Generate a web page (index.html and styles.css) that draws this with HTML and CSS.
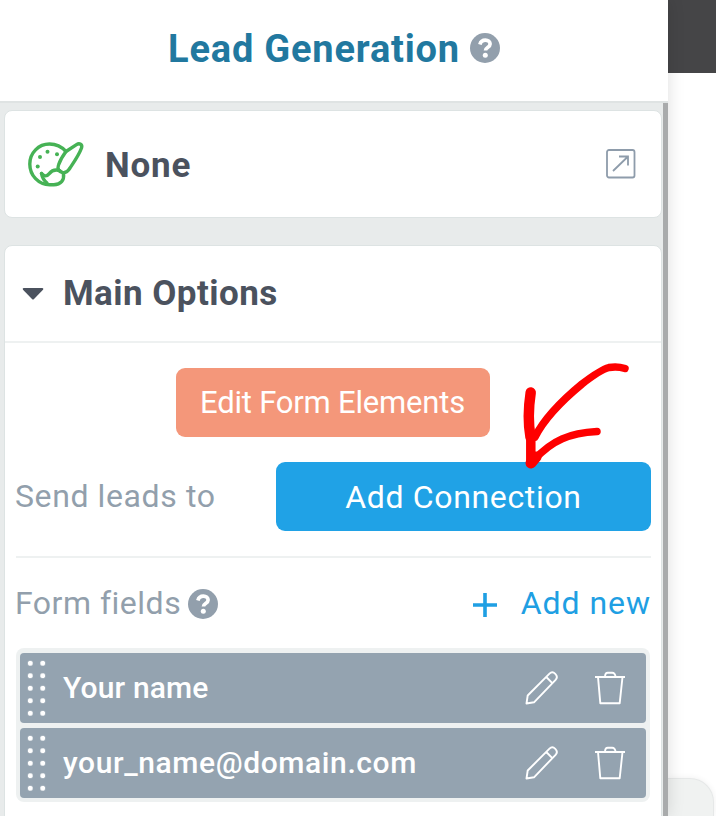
FILE: index.html
```
<!DOCTYPE html>
<html lang="en">
<head>
    <meta charset="UTF-8">
    <meta name="viewport" content="width=device-width, initial-scale=1.0">
    <title>Lead Generation</title>

    <link rel="stylesheet" href="styles.css">
</head>
<body>

    <svg class="sprite">
        <symbol id="help" viewBox="0 0 30 30">
            <circle cx="15" cy="15" r="15" fill="currentColor"/>
            <path d="M9.9 11.4C10.8 8.2 13 7.2 15.4 7.2c2.8 0 4.700 1.600 4.700 3.900 0 3.500-4.600 3.400-4.600 6.300" fill="none" stroke="#fff" stroke-width="3.700"/>
            <circle cx="15.300" cy="22.300" r="2.500" fill="#fff"/>
        </symbol>
        <symbol id="pencil" viewBox="0 0 34 34">
            <path d="M1.500 32.500l1.200-8L24.500 2.700c1.700-1.700 4-1.600 5.800.2s1.900 4.200.3 5.900L9 31.300zM21.300 6l6 6.200" fill="none" stroke="#fff" stroke-width="1.900" stroke-linejoin="round"/>
        </symbol>
        <symbol id="trash" viewBox="0 0 30 34">
            <path d="M0 6h30M3 6l2.300 26.200h19.400L27.500 6M10 6c0-3 1-4.200 2.800-4.200h4.400C19 1.800 20.500 3 20.500 6" fill="none" stroke="#fff" stroke-width="1.900" stroke-linejoin="round"/>
        </symbol>
    </svg>

    <div class="page">
        <div class="sidebar">
            <div class="header">
                <h1 class="title">Lead Generation</h1>
                <svg class="help"><use href="#help"/></svg>
            </div>
            <div class="panel">
                <div class="card template">
                    <svg class="palette" viewBox="0 0 58 48">
                        <g fill="none" stroke="#46b255" stroke-width="3.400" stroke-linejoin="round" stroke-linecap="round">
                            <path d="M39 11.500C34.500 6.500 29 4 22.500 4 11.500 4 2.800 13 2.800 24c0 11.500 8.700 20.700 20 20.700h4c7 0 10.700-4.500 9.700-11.200"/>
                            <path d="M39 11.500L49.500 4.600c3-2 6.200-.2 5 3.400-2.500 7-7.500 14-11.500 20-2.500 4-4.500 5.200-7.500 4.500-3.500-1-5.500-3.500-4-7.500 1.500-4.500 4.500-9.500 7.500-13.500z"/>
                            <path d="M14.500 33.500c3 3 5 3.300 7.500.3 2.800-3.400 6.500-4.800 11-3"/>
                            <path d="M14.500 33.500c.7 4 2.200 6.800 5.500 9.500"/>
                        </g>
                        <g fill="#46b255">
                            <circle cx="10.700" cy="26.500" r="2"/>
                            <circle cx="13" cy="17" r="2"/>
                            <circle cx="20.500" cy="11.800" r="2"/>
                            <circle cx="30" cy="14.300" r="2"/>
                        </g>
                    </svg>
                    <p class="template-name">None</p>
                    <svg class="open" viewBox="0 0 30 30" fill="none" stroke="#8e9cab" stroke-width="1.800">
                        <rect x="1" y="1" width="27.500" height="27.500" rx="2"/>
                        <path d="M7 22L22 7.500M13 7.500h9v9"/>
                    </svg>
                </div>

                <div class="card options">
                    <div class="options-head">
                        <svg class="caret" viewBox="0 0 22 12"><path d="M1.500 0h19q1.500.5.500 1.800L12 11q-1 1-2 0L1 1.800Q0 .5 1.500 0z" fill="#4b525e"/></svg>
                        <h2 class="options-title">Main Options</h2>
                    </div>
                    <div class="options-body">
                        <button class="btn btn-edit"><span>Edit Form Elements</span></button>
                        <div class="row">
                            <p class="label label-send">Send leads to</p>
                            <button class="btn btn-add"><span>Add Connection</span></button>
                        </div>
                        <div class="row fields-head">
                            <p class="label label-fields">Form fields</p>
                            <svg class="help"><use href="#help"/></svg>
                            <a class="add-new">
                                <svg class="plus" viewBox="0 0 24 24"><path d="M0 12h24M12 0v24" stroke="#1f9fe3" stroke-width="3.600"/></svg>
                                <span>Add new</span>
                            </a>
                        </div>
                        <div class="fields">
                            <div class="field">
                                <span class="grip"></span>
                                <p class="field-name">Your name</p>
                                <svg class="pencil"><use href="#pencil"/></svg>
                                <svg class="trash"><use href="#trash"/></svg>
                            </div>
                            <div class="field">
                                <span class="grip"></span>
                                <p class="field-name field-email">your_name@domain.com</p>
                                <svg class="pencil"><use href="#pencil"/></svg>
                                <svg class="trash"><use href="#trash"/></svg>
                            </div>
                        </div>
                    </div>
                </div>
                <div class="scrollbar"></div>
            </div>
        </div>
        <div class="preview">
            <div class="preview-bar"></div>
            <div class="preview-box"></div>
        </div>
    </div>

    <svg class="arrow" viewBox="0 0 112 112">
        <g fill="none" stroke="#fe0000" stroke-linecap="round" stroke-linejoin="round">
            <path d="M105 9.500C99 7.500 94 7.500 89 8.500 80 11 71 18 62 25 45 39 25 58 15 78" stroke-width="7.500"/>
            <path d="M10.700 33.500C8.500 48 8 64 10.500 78" stroke-width="10.500"/>
            <path d="M10.800 76v28" stroke-width="9.500"/>
            <path d="M77 72.500C50 74 32 81 14 101" stroke-width="7.500"/>
            <path d="M11 104l5-6" stroke-width="11"/>
        </g>
    </svg>

</body>
</html>
```
FILE: styles.css
```
* {
    padding: 0;
    margin: 0;
    box-sizing: border-box;
}

body {
    height: 816px;
    overflow: hidden;
    background-color: #fff;
    font-family: Roboto, sans-serif;
}

svg {
    display: block;
    flex-shrink: 0;
}

.sprite {
    display: none;
}

.page {
    height: 816px;
    display: flex;
}

.sidebar {
    width: 668px;
    height: 100%;
    flex-shrink: 0;

    display: flex;
    flex-direction: column;

    position: relative;
    z-index: 1;

    background-color: #fff;
    box-shadow: 0 0 16px #0002;
}

.header {
    height: 103px;
    padding-bottom: 5px;
    flex-shrink: 0;

    display: flex;
    justify-content: center;
    align-items: center;
    gap: 10px;

    border-bottom: 2px solid #dfe3e3;
}

.title {
    padding-top: 2px;
    font-size: 38px;
    line-height: 44px;
    font-weight: 700;
    letter-spacing: 0.8px;
    color: #21789f;
    white-space: nowrap;
}

.help {
    width: 30px;
    height: 30px;
    color: #929fac;
}

.panel {
    flex: 1;
    padding: 7px 6px 0 4px;
    overflow: hidden;

    display: flex;
    flex-direction: column;
    gap: 27px;

    position: relative;

    background-color: #e8ebeb;
}

.scrollbar {
    width: 5px;
    height: 100%;

    position: absolute;
    top: 0;
    right: 0;

    background-color: #a9abac;
}

.card {
    flex-shrink: 0;
    background-color: #fff;
    border: 1px solid #dde3e3;
    border-radius: 8px;
}

.template {
    height: 108px;
    padding: 0 25px 0 22px;

    display: flex;
    align-items: center;
}

.palette {
    width: 58px;
    height: 48px;
}

.template-name {
    margin-left: 20px;
    padding-top: 2px;
    flex: 1;

    font-size: 35px;
    font-weight: 700;
    letter-spacing: 0.8px;
    color: #4b525e;
}

.open {
    width: 30px;
    height: 30px;
}

.options {
    height: 620px;
}

.options-head {
    height: 97px;
    padding-left: 17px;

    display: flex;
    align-items: center;
    gap: 19px;

    border-bottom: 2px solid #eef1f1;
}

.caret {
    width: 22px;
    height: 12px;
}

.options-title {
    font-size: 35px;
    font-weight: 700;
    letter-spacing: 0.45px;
    color: #4b525e;
}

.options-body {
    padding: 25px 10px 0 11px;

    display: flex;
    flex-direction: column;
}

.btn {
    height: 69px;

    border: none;
    border-radius: 9px;

    font-family: inherit;
    font-size: 31px;
    color: #fff;
    white-space: nowrap;
}

.btn-edit {
    width: 314px;
    margin-right: 2px;
    align-self: center;
    letter-spacing: -0.2px;
    background-color: #f4977a;
}

.btn-add {
    width: 375px;
    margin-left: auto;
    font-size: 32px;
    letter-spacing: 0.65px;
    background-color: #20a2e6;
}

.row {
    padding: 25px 0;

    display: flex;
    align-items: center;

    border-bottom: 2px solid #eef1f1;
}

.label {
    margin-left: -1px;
    font-size: 32px;
    line-height: 38px;
    color: #929fac;
    white-space: nowrap;
}

.label-send {
    padding-bottom: 2px;
    letter-spacing: 0.6px;
}

.label-fields {
    letter-spacing: 0.5px;
}

.fields-head {
    height: 90px;
    padding: 0;
    border: none;
}

.fields-head .help {
    margin: 2px 0 0 7px;
}

.add-new {
    margin-left: auto;

    display: flex;
    align-items: center;
    gap: 24px;

    font-size: 32px;
    letter-spacing: 0.95px;
    color: #1f9fe3;
    white-space: nowrap;
}

.plus {
    width: 24px;
    height: 24px;
    margin-top: 4px;
}

.fields {
    width: 634px;
    padding: 5px 4px 4px;

    display: flex;
    flex-direction: column;
    gap: 5px;

    background-color: #eef1f1;
    border-radius: 8px;
}

.field {
    height: 70px;
    padding: 0 21px 0 7px;

    display: flex;
    align-items: center;

    background-color: #94a3b0;
    border-radius: 4px;
}

.grip {
    width: 25px;
    height: 62px;
    background: radial-gradient(circle, #fff 2.2px, #fff0 2.9px) -3px 0 / 12.5px 12.5px;
}

.field-name {
    margin-left: 11px;
    padding-bottom: 2px;
    flex: 1;

    font-size: 30px;
    font-weight: 500;
    letter-spacing: 0.15px;
    color: #fff;
}

.field-email {
    letter-spacing: 0.6px;
}

.pencil {
    width: 34px;
    height: 34px;
}

.trash {
    width: 30px;
    height: 34px;
    margin-left: 36px;
}

.preview {
    flex: 1;

    display: flex;
    flex-direction: column;
    justify-content: space-between;
}

.preview-bar {
    height: 73px;
    background-color: #454547;
}

.preview-box {
    width: 46px;
    height: 38px;

    background-color: #f0f2f1;
    border: 1px solid #e6e8e8;
    border-width: 1px 1px 0 0;
    border-radius: 0 24px 0 0;
    box-shadow: 0 0 6px #0001;
}

/* hand-drawn pointer over the button */
.arrow {
    width: 112px;
    height: 112px;

    position: absolute;
    top: 359px;
    left: 520px;
    z-index: 2;
}
```
